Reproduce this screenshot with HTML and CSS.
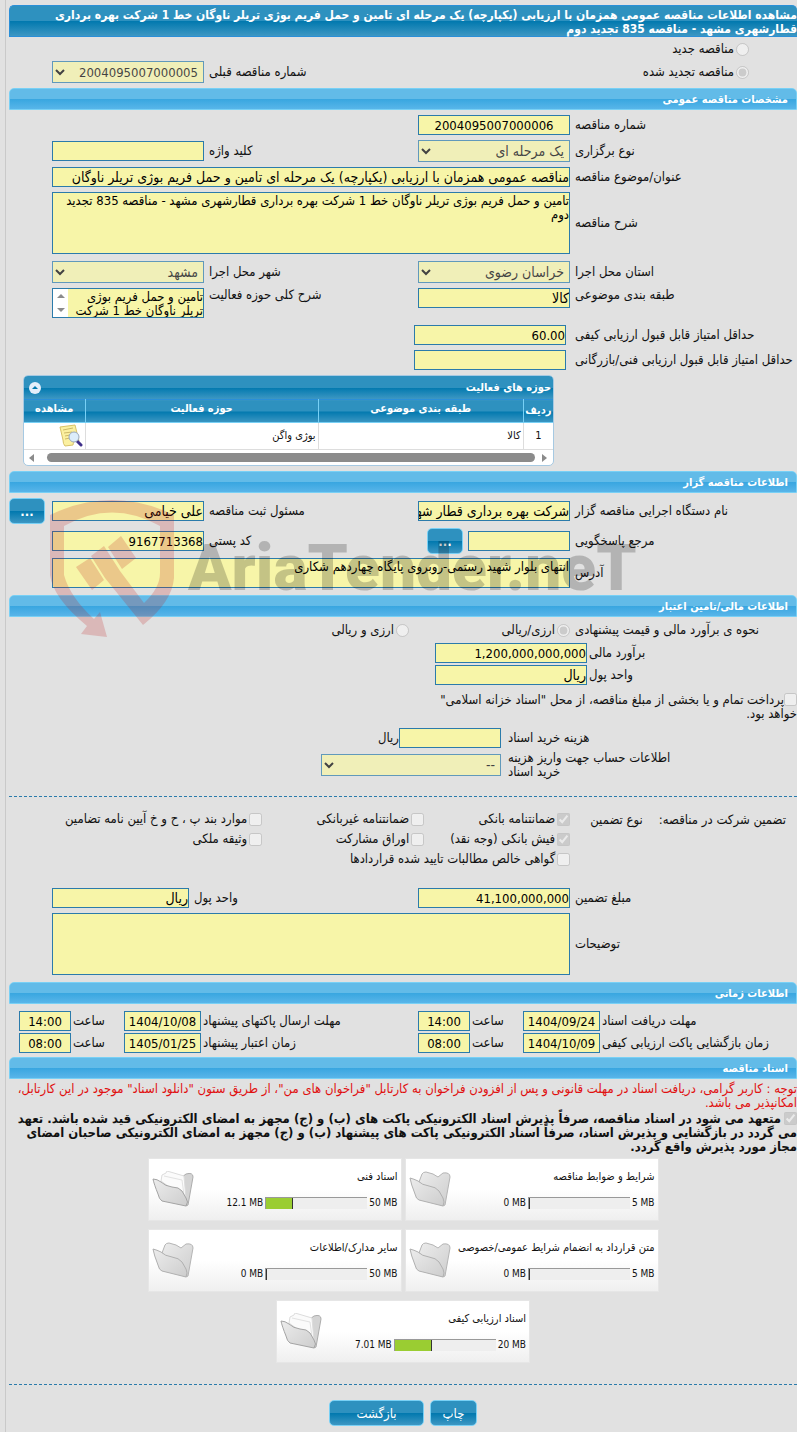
FILE: index.html
```html
<!DOCTYPE html>
<html lang="fa" dir="rtl">
<head>
  <meta charset="UTF-8">
  <meta name="viewport" content="width=device-width, initial-scale=1.0">
  <title>مشاهده اطلاعات مناقصه عمومی</title>
  <link rel="stylesheet" href="styles.css">
</head>
<body>
  <svg class="defs" aria-hidden="true">
    <defs>
      <linearGradient id="folderFill" x1="0" y1="0" x2="1" y2="1">
        <stop offset="0" stop-color="#ececec"/>
        <stop offset="1" stop-color="#cdcdcd"/>
      </linearGradient>
      <symbol id="folder" viewBox="0 0 42 38">
        <path d="M10 11 L13 3 Q14 1 17 1 L24 3 L29 6 L34 2 Q41 1 41 6 L36 34 L34 35 Z" fill="url(#folderFill)" stroke="#b5b5b5"/>
        <path d="M1 7 Q2 13 6 23 Q7 28 10 29 L34 35 Q36 31 34 27 L30 20 Q27 16 20 15 Q13 14 9 10 Q5 8 1 7 Z" fill="url(#folderFill)" stroke="#b0b0b0"/>
      </symbol>
      <symbol id="folder-full" viewBox="0 0 42 38">
        <path d="M12 12 L30 6 L34 3 Q41 1 41 6 L36 34 L34 35 Z" fill="#d4d4d4" stroke="#adadad"/>
        <path d="M9 10 L10 4 L14 2 L15 0 L32 5 L34 28 Z" fill="#fbfbfb" stroke="#dcdcdc"/>
        <path d="M12 5 L30 9 L32 24" fill="none" stroke="#e2e2e2"/>
        <path d="M1 8 Q2 13 6 23 Q7 28 10 30 L34 35 Q37 31 34 27 L30 20 Q27 16 20 16 Q13 15 9 11 Q5 8 1 8 Z" fill="url(#folderFill)" stroke="#a4a4a4"/>
      </symbol>
    </defs>
  </svg>

  <main class="panel">
    <h1 class="title">مشاهده اطلاعات مناقصه عمومی همزمان با ارزیابی (یکپارچه) یک مرحله ای تامین و حمل فریم بوژی تریلر ناوگان خط 1 شرکت بهره برداری قطارشهری مشهد - مناقصه 835 تجدید دوم</h1>

    <div class="kind">
      <label class="choice"><input type="radio" name="kind" disabled>مناقصه جدید</label>
      <div class="row">
        <label class="choice renewed"><input type="radio" name="kind" checked disabled>مناقصه تجدید شده</label>
        <label for="prev" class="label">شماره مناقصه قبلی</label>
        <select id="prev" class="field num" disabled><option>2004095007000005</option></select>
      </div>
    </div>

    <h2 class="bar">مشخصات مناقصه عمومی</h2>
    <section class="form">
      <div class="row">
        <label for="no" class="label">شماره مناقصه</label>
        <input id="no" class="field num center" value="2004095007000006" readonly>
      </div>
      <div class="row">
        <label for="method" class="label">نوع برگزاری</label>
        <select id="method" class="field" disabled><option>یک مرحله ای</option></select>
        <label for="keyword" class="label">کلید واژه</label>
        <input id="keyword" class="field" readonly>
      </div>
      <div class="row">
        <label for="subject" class="label">عنوان/موضوع مناقصه</label>
        <input id="subject" class="field wide" value="مناقصه عمومی همزمان با ارزیابی (یکپارچه) یک مرحله ای تامین و حمل فریم بوژی تریلر ناوگان" readonly>
      </div>
      <div class="row">
        <label for="desc" class="label">شرح مناقصه</label>
        <textarea id="desc" class="field wide tall" readonly>تامین و حمل فریم بوژی تریلر ناوگان خط 1 شرکت بهره برداری قطارشهری مشهد - مناقصه 835 تجدید دوم</textarea>
      </div>
      <div class="row spaced-sm">
        <label for="province" class="label">استان محل اجرا</label>
        <select id="province" class="field" disabled><option>خراسان رضوی</option></select>
        <label for="city" class="label">شهر محل اجرا</label>
        <select id="city" class="field" disabled><option>مشهد</option></select>
      </div>
      <div class="row top">
        <label for="category" class="label">طبقه بندی موضوعی</label>
        <input id="category" class="field" value="کالا" readonly>
        <label for="scope" class="label">شرح کلی حوزه فعالیت</label>
        <div class="field scroll-box">
          <textarea id="scope" readonly>تامین و حمل فریم بوژی تریلر ناوگان خط 1 شرکت</textarea>
          <span class="steps"><i class="up"></i><i class="down"></i></span>
        </div>
      </div>
      <div class="row inset spaced-sm">
        <label for="quality" class="label">حداقل امتیاز قابل قبول ارزیابی کیفی</label>
        <input id="quality" class="field num" value="60.00" readonly>
      </div>
      <div class="row inset">
        <label for="technical" class="label">حداقل امتیاز قابل قبول ارزیابی فنی/بازرگانی</label>
        <input id="technical" class="field num" readonly>
      </div>
    </section>

    <section class="grid-box">
      <header class="grid-title">
        <span>حوزه های فعالیت</span>
        <button class="collapse" aria-label="بستن"><i></i></button>
      </header>
      <table class="grid">
        <thead>
          <tr><th class="c-row">ردیف</th><th class="c-cat">طبقه بندی موضوعی</th><th>حوزه فعالیت</th><th class="c-view">مشاهده</th></tr>
        </thead>
        <tbody>
          <tr>
            <td class="c-row">1</td><td>کالا</td><td>بوژی واگن</td>
            <td class="c-view">
              <svg class="view-icon" viewBox="0 0 24 24">
                <path d="M1 3 L16 1 L20 17 Q14 16 14 21 L6 22 Q4 20 4 16 Z" fill="#fbf0a0" stroke="#d8c268"/>
                <path d="M4 6 L14 4 M5 9 L13 8 M6 12 L11 11 M6 15 L11 14" stroke="#cdb968"/>
                <path d="M18 17 L22 21" stroke="#40308a" stroke-width="3" stroke-linecap="round"/>
                <circle cx="15" cy="13" r="5" fill="#dcedfb" stroke="#9aa9bd"/>
              </svg>
            </td>
          </tr>
        </tbody>
      </table>
      <div class="hscroll"><i class="next"></i><span class="thumb"></span><i class="prev"></i></div>
    </section>

    <h2 class="bar">اطلاعات مناقصه گزار</h2>
    <section class="form buyer">
      <div class="row">
        <label for="org" class="label">نام دستگاه اجرایی مناقصه گزار</label>
        <input id="org" class="field" value="شرکت بهره برداری قطار شهری مشهد" readonly>
        <label for="officer" class="label">مسئول ثبت مناقصه</label>
        <input id="officer" class="field" value="علی خیامی" readonly>
        <button class="btn more">...</button>
      </div>
      <div class="row">
        <label for="contact" class="label">مرجع پاسخگویی</label>
        <div class="picker">
          <input id="contact" class="field" readonly>
          <button class="btn more">...</button>
        </div>
        <label for="zip" class="label">کد پستی</label>
        <input id="zip" class="field num" value="9167713368" readonly>
      </div>
      <div class="row">
        <label for="address" class="label">آدرس</label>
        <textarea id="address" class="field wide short" readonly>انتهای بلوار شهید رستمی-روبروی پایگاه چهاردهم شکاری</textarea>
      </div>
      <div class="watermark" dir="ltr">
        <svg class="shield" viewBox="0 0 126 138">
          <path d="M0 15 Q62 -15 124 15 V78 Q122 102 93 125 L55 78 L41 56 L54 46 L70 71 L94 103 Q110 88 110 73 V26 Q62 -1 14 26 V75 Q20 97 44 119 L50 112 L57 137 L31 134 L37 126 Q3 98 0 75 Z"/>
          <path d="M26 67 L40 58 L54 80 L42 90 Z M58 47 L71 36 L86 58 L72 69 Z"/>
        </svg>
        <span>AriaTender.neT</span>
      </div>
    </section>

    <h2 class="bar">اطلاعات مالی/تامین اعتبار</h2>
    <section class="finance">
      <div class="row pay-kind">
        <span class="label">نحوه ی برآورد مالی و قیمت پیشنهادی</span>
        <label class="choice"><input type="radio" name="money" checked disabled>ارزی/ریالی</label>
        <label class="choice"><input type="radio" name="money" disabled>ارزی و ریالی</label>
      </div>
      <div class="estimate">
        <label for="estimate" class="label">برآورد مالی</label>
        <input id="estimate" class="field num" value="1,200,000,000,000" readonly>
        <label for="unit" class="label">واحد پول</label>
        <input id="unit" class="field" value="ریال" readonly>
      </div>
      <label class="treasury"><input type="checkbox" disabled>پرداخت تمام و یا بخشی از مبلغ مناقصه، از محل "اسناد خزانه اسلامی" خواهد بود.</label>
      <div class="fee">
        <label for="fee" class="label">هزینه خرید اسناد</label>
        <div class="fee-field"><input id="fee" class="field" readonly><span>ریال</span></div>
        <label for="account" class="label account">اطلاعات حساب جهت واریز هزینه خرید اسناد</label>
        <select id="account" class="field" disabled><option>--</option></select>
      </div>
    </section>

    <hr>

    <section class="guarantee">
      <div class="types">
        <span class="types-title">تضمین شرکت در مناقصه:</span>
        <span class="types-label">نوع تضمین</span>
        <div class="checks">
          <label class="choice"><input type="checkbox" checked disabled>ضمانتنامه بانکی</label>
          <label class="choice"><input type="checkbox" disabled>ضمانتنامه غیربانکی</label>
          <label class="choice"><input type="checkbox" disabled>موارد بند پ ، ح و خ آیین نامه تضامین</label>
          <label class="choice"><input type="checkbox" checked disabled>فیش بانکی (وجه نقد)</label>
          <label class="choice"><input type="checkbox" disabled>اوراق مشارکت</label>
          <label class="choice"><input type="checkbox" disabled>وثیقه ملکی</label>
          <label class="choice full"><input type="checkbox" disabled>گواهی خالص مطالبات تایید شده قراردادها</label>
        </div>
      </div>
      <div class="row amount">
        <label for="amount" class="label">مبلغ تضمین</label>
        <input id="amount" class="field num" value="41,100,000,000" readonly>
        <label for="unit2" class="label">واحد پول</label>
        <input id="unit2" class="field" value="ریال" readonly>
      </div>
      <div class="row">
        <label for="notes" class="label">توضیحات</label>
        <textarea id="notes" class="field wide tall" readonly></textarea>
      </div>
    </section>

    <h2 class="bar">اطلاعات زمانی</h2>
    <section class="times">
      <label for="d1">مهلت دریافت اسناد</label>
      <input id="d1" class="field num center" value="1404/09/24" readonly>
      <label for="t1">ساعت</label>
      <input id="t1" class="field num center" value="14:00" readonly>
      <label for="d2">مهلت ارسال پاکتهای پیشنهاد</label>
      <input id="d2" class="field num center" value="1404/10/08" readonly>
      <label for="t2">ساعت</label>
      <input id="t2" class="field num center" value="14:00" readonly>
      <label for="d3" class="first">زمان بازگشایی پاکت ارزیابی کیفی</label>
      <input id="d3" class="field num center" value="1404/10/09" readonly>
      <label for="t3">ساعت</label>
      <input id="t3" class="field num center" value="08:00" readonly>
      <label for="d4">زمان اعتبار پیشنهاد</label>
      <input id="d4" class="field num center" value="1405/01/25" readonly>
      <label for="t4">ساعت</label>
      <input id="t4" class="field num center" value="08:00" readonly>
    </section>

    <h2 class="bar">اسناد مناقصه</h2>
    <p class="notice">توجه : کاربر گرامی، دریافت اسناد در مهلت قانونی و پس از افزودن فراخوان به کارتابل "فراخوان های من"، از طریق ستون "دانلود اسناد" موجود در این کارتابل، امکانپذیر می باشد.</p>
    <label class="commit"><input type="checkbox" checked disabled>متعهد می شود در اسناد مناقصه، صرفاً پذیرش اسناد الکترونیکی پاکت های (ب) و (ج) مجهز به امضای الکترونیکی قید شده باشد. تعهد می گردد در بازگشایی و پذیرش اسناد، صرفاً اسناد الکترونیکی پاکت های پیشنهاد (ب) و (ج) مجهز به امضای الکترونیکی صاحبان امضای مجاز مورد پذیرش واقع گردد.</label>

    <section class="docs">
      <article class="doc">
        <h3>شرایط و ضوابط مناقصه</h3>
        <svg class="folder"><use href="#folder"/></svg>
        <div class="usage" dir="ltr"><span>0 MB</span><span class="meter"><i style="width: 0%"></i></span><span>5 MB</span></div>
      </article>
      <article class="doc">
        <h3>اسناد فنی</h3>
        <svg class="folder"><use href="#folder-full"/></svg>
        <div class="usage" dir="ltr"><span>12.1 MB</span><span class="meter"><i style="width: 26%"></i></span><span>50 MB</span></div>
      </article>
      <article class="doc">
        <h3>متن قرارداد به انضمام شرایط عمومی/خصوصی</h3>
        <svg class="folder"><use href="#folder"/></svg>
        <div class="usage" dir="ltr"><span>0 MB</span><span class="meter"><i style="width: 0%"></i></span><span>5 MB</span></div>
      </article>
      <article class="doc">
        <h3>سایر مدارک/اطلاعات</h3>
        <svg class="folder"><use href="#folder"/></svg>
        <div class="usage" dir="ltr"><span>0 MB</span><span class="meter"><i style="width: 0%"></i></span><span>50 MB</span></div>
      </article>
      <article class="doc">
        <h3>اسناد ارزیابی کیفی</h3>
        <svg class="folder"><use href="#folder-full"/></svg>
        <div class="usage" dir="ltr"><span>7.01 MB</span><span class="meter"><i style="width: 37%"></i></span><span>20 MB</span></div>
      </article>
    </section>

    <hr>

    <footer class="actions">
      <button class="btn">چاپ</button>
      <button class="btn back">بازگشت</button>
    </footer>
  </main>
</body>
</html>
```
FILE: styles.css
```css
:root {
  --bg: #e1e1e1;
  --line: #2b7bab;
  --field: #f7f5a8;
  --dark-bar: linear-gradient(#2e91bf 50%, #0078ae 50%, #3d97c3);
  --light-bar: linear-gradient(#62bbe8 50%, #38a6e0 50%, #58b5e9);
}

* {
  box-sizing: border-box;
}

body,
input,
select,
textarea,
button {
  font-family: "DejaVu Sans Condensed", "DejaVu Sans", Tahoma, sans-serif;
}

body {
  margin: 0;
  background: var(--bg);
  color: #111;
  font-size: 13px;
  line-height: 14px;
}

.defs {
  position: absolute;
  width: 0;
  height: 0;
}

.panel {
  min-height: 100vh;
  margin-left: 5px;
  padding: 5px 0 5px 3px;
  border-left: 1px solid #c9c9c9;
}

.title {
  margin: 0;
  padding: 2px 0 0;
  height: 32px;
  border: 1px solid #2a8fd8;
  border-right: 0;
  border-radius: 5px 5px 0 0;
  background: var(--dark-bar);
  color: #fff;
  font-size: 12px;
  line-height: 14px;
}

.bar {
  margin: 0;
  padding-right: 8px;
  height: 22px;
  border: 1px solid #78d0f5;
  border-radius: 5px 5px 0 0;
  background: var(--light-bar);
  color: #fff;
  font-size: 11px;
  line-height: 21px;
}

.kind {
  display: flex;
  flex-direction: column;
  gap: 2px;
  padding: 2px 0 5px;
}

.kind > .choice {
  height: 20px;
  padding-right: 48px;
}

.choice {
  display: flex;
  align-items: center;
  gap: 2px;
}

.choice input,
.treasury input,
.commit input {
  flex: none;
  width: 13px;
  height: 13px;
  margin: 0;
}

.row {
  display: grid;
  grid-template-columns: 222fr 152px 204fr 152px 38px;
  column-gap: 5px;
  align-items: center;
}

.renewed {
  grid-column: 1 / 3;
  padding-right: 48px;
}

.label {
  text-align: left;
}

.form {
  display: flex;
  flex-direction: column;
  gap: 5px;
  padding: 5px 0;
}

.field {
  width: 100%;
  min-width: 0;
  height: 20px;
  margin: 0;
  padding: 1px 0;
  border: 1px solid var(--line);
  border-radius: 0;
  background: var(--field);
  color: #000;
  font-size: 14px;
}

.num {
  font-size: 13px;
}

select.field {
  height: 22px;
  padding: 0 1px;
  opacity: 0.7;
}

textarea {
  display: block;
  resize: none;
  line-height: 14px;
}

textarea.field {
  padding: 1px 0;
  font-size: 13px;
}

.center {
  text-align: center;
}

.wide {
  grid-column: 2 / 5;
}

.tall {
  height: 62px;
}

.short {
  height: 30px;
}

.top {
  align-items: start;
}

.spaced-sm {
  margin-top: 2px;
}

.inset {
  grid-template-columns: 226fr 152px 400fr;
}

.inset .label {
  padding-left: 4px;
}

.scroll-box {
  display: flex;
  height: 30px;
  padding: 0;
}

.scroll-box textarea {
  flex: 1;
  min-width: 0;
  padding: 1px 0;
  border: 0;
  background: none;
  font-size: 13px;
  overflow: hidden;
}

.steps {
  display: flex;
  flex-direction: column;
  justify-content: space-around;
  align-items: center;
  width: 15px;
  background: #fff;
}

.up,
.down {
  border: 4px solid transparent;
}

.up {
  border-top: 0;
  border-bottom-color: #8b8b8b;
}

.down {
  border-bottom: 0;
  border-top-color: #8b8b8b;
}

.grid-box {
  width: 67.4%;
  margin: 0 auto 5px 14px;
  border: 1px solid #a6c9e2;
  border-radius: 5px;
  background: #fff;
  overflow: hidden;
}

.grid-title {
  display: flex;
  justify-content: space-between;
  align-items: center;
  height: 23px;
  padding: 0 2px 0 5px;
  background: var(--dark-bar);
  color: #fff;
  font-size: 11px;
  font-weight: bold;
}

.collapse {
  display: flex;
  justify-content: center;
  align-items: center;
  width: 12px;
  height: 12px;
  padding: 0;
  border: 0;
  border-radius: 6px;
  background: #e4eefa;
}

.collapse i {
  border: 3px solid transparent;
  border-top: 0;
  border-bottom-color: #0078ae;
}

.grid {
  width: 100%;
  border-collapse: collapse;
  table-layout: fixed;
  font-size: 11px;
}

.grid th {
  height: 23px;
  padding: 0 0 4px;
  border-top: 1px solid #2a8fd8;
  border-bottom: 1px solid #78d0f5;
  border-left: 1px solid #78d0f5;
  background: var(--dark-bar);
  color: #fff;
}

.grid td {
  height: 27px;
  padding: 0 2px;
  border-bottom: 1px solid #ddd;
  border-left: 1px solid #ddd;
}

.grid .c-row {
  width: 30px;
  padding-bottom: 0;
  text-align: center;
}

.grid .c-cat {
  width: 205px;
}

.grid .c-view {
  width: 61px;
  border-left: 0;
}

.view-icon {
  display: block;
  width: 24px;
  height: 24px;
}

.hscroll {
  display: flex;
  justify-content: space-between;
  align-items: center;
  height: 15px;
  padding: 0 6px 0 5px;
}

.thumb {
  flex: 1;
  height: 9px;
  margin: 0 7px 0 13px;
  border-radius: 5px;
  background: #8b8b8b;
}

.next,
.prev {
  border: 4px solid transparent;
}

.next {
  border-right: 0;
  border-left: 5px solid #8b8b8b;
}

.prev {
  border-left: 0;
  border-right: 5px solid #8b8b8b;
}

.btn {
  height: 26px;
  padding: 0;
  border: 1px solid #78d0f5;
  border-radius: 5px;
  background: var(--dark-bar);
  color: #fff;
  font-size: 13px;
}

.more {
  justify-self: end;
  width: 36px;
  font-weight: bold;
}

/* the logo is printed over the buyer section */
.buyer {
  position: relative;
  gap: 4px;
  padding-bottom: 7px;
}

.picker {
  display: flex;
  align-items: center;
  gap: 5px;
}

.picker .field {
  width: 102px;
}

.watermark {
  position: absolute;
  top: 7px;
  left: 41px;
  z-index: 1;
  display: flex;
  align-items: center;
  gap: 12px;
  color: #000;
  font: 900 64px/100px Roboto, sans-serif;
  opacity: 0.2;
  pointer-events: none;
}

.shield {
  width: 126px;
  height: 138px;
  fill: #c01818;
}

.finance {
  padding: 5px 0 17px;
}

.pay-kind {
  grid-template-columns: 222fr 156px 400fr;
  height: 16px;
}

.estimate {
  display: grid;
  grid-template-columns: 208fr 152px 424fr;
  gap: 2px;
  align-items: center;
  margin-top: 5px;
}

.estimate .label,
.fee .label {
  grid-column: 1;
}

.estimate .field {
  grid-column: 2;
}

.treasury {
  display: block;
  width: 366px;
  margin: 8px 0 7px;
}

.treasury input {
  float: right;
}

.fee {
  display: grid;
  grid-template-columns: 289fr 180px 305fr;
  gap: 3px 7px;
  align-items: center;
}

.fee .account {
  justify-self: end;
  width: 163px;
  text-align: right;
}

.fee-field {
  display: flex;
  align-items: center;
}

.fee-field .field {
  width: 102px;
}

.fee .account {
  text-align: left;
}

hr {
  margin: 0;
  border: 0;
  border-top: 1px dashed var(--line);
}

.types {
  display: flex;
  padding: 12px 11px 0 0;
  min-height: 91px;
}

.types-title,
.types-label {
  padding-top: 4px;
}

.types-label {
  margin: 0 16px 0 20px;
}

.checks {
  display: grid;
  grid-template-columns: 146px 162px auto;
  grid-auto-rows: 20px;
  align-content: start;
}

.full {
  grid-column: 1 / 4;
}

.amount {
  grid-template-columns: 222fr 152px 219fr 137px 38px;
  margin-bottom: 5px;
}

.guarantee {
  padding-bottom: 7px;
}

.times {
  display: grid;
  grid-template-columns: 195fr 77px 49px 52px 213fr 77px 49px 52px 8px;
  gap: 2px;
  align-items: center;
  padding: 7px 0 4px;
}

.times label {
  text-align: left;
}

.times .first {
  grid-column: 1;
}

.notice {
  margin: 3px 0 0;
  color: #e01010;
  line-height: 14px;
}

.commit {
  display: block;
  margin-top: 2px;
  font-weight: bold;
}

.commit input {
  float: right;
  margin-left: 3px;
}

.docs {
  display: flex;
  flex-wrap: wrap;
  justify-content: center;
  gap: 8px 3px;
  width: 520px;
  max-width: 100%;
  margin: 4px auto 21px;
}

.doc {
  display: grid;
  grid-template-columns: 1fr auto;
  grid-template-rows: 12px 14px;
  row-gap: 13px;
  width: 254px;
  height: 63px;
  padding: 12px 3px 0;
  border: 1px solid #e6e6e6;
  background: linear-gradient(#fff 50%, #efefef);
  font-size: 11px;
}

.doc h3 {
  grid-column: 1 / 3;
  grid-row: 1;
  margin: 0;
  font-size: 11px;
  font-weight: normal;
  line-height: 12px;
}

.folder {
  grid-column: 2;
  grid-row: 1 / 3;
  width: 42px;
  height: 38px;
}

.usage {
  grid-column: 1;
  grid-row: 2;
  display: flex;
  justify-content: flex-end;
  align-items: center;
  gap: 2px;
  font-size: 10px;
}

.meter {
  width: 102px;
  height: 12px;
  border-top: 1px solid #999;
  border-left: 1px solid #999;
  background: #eee;
}

.meter i {
  display: block;
  height: 100%;
  border-right: 1px solid #333;
  background: #9acd32;
}

.actions {
  display: flex;
  justify-content: center;
  gap: 6px;
  padding-top: 15px;
}

.actions .btn {
  width: 47px;
}

.actions .back {
  width: 95px;
}
```
